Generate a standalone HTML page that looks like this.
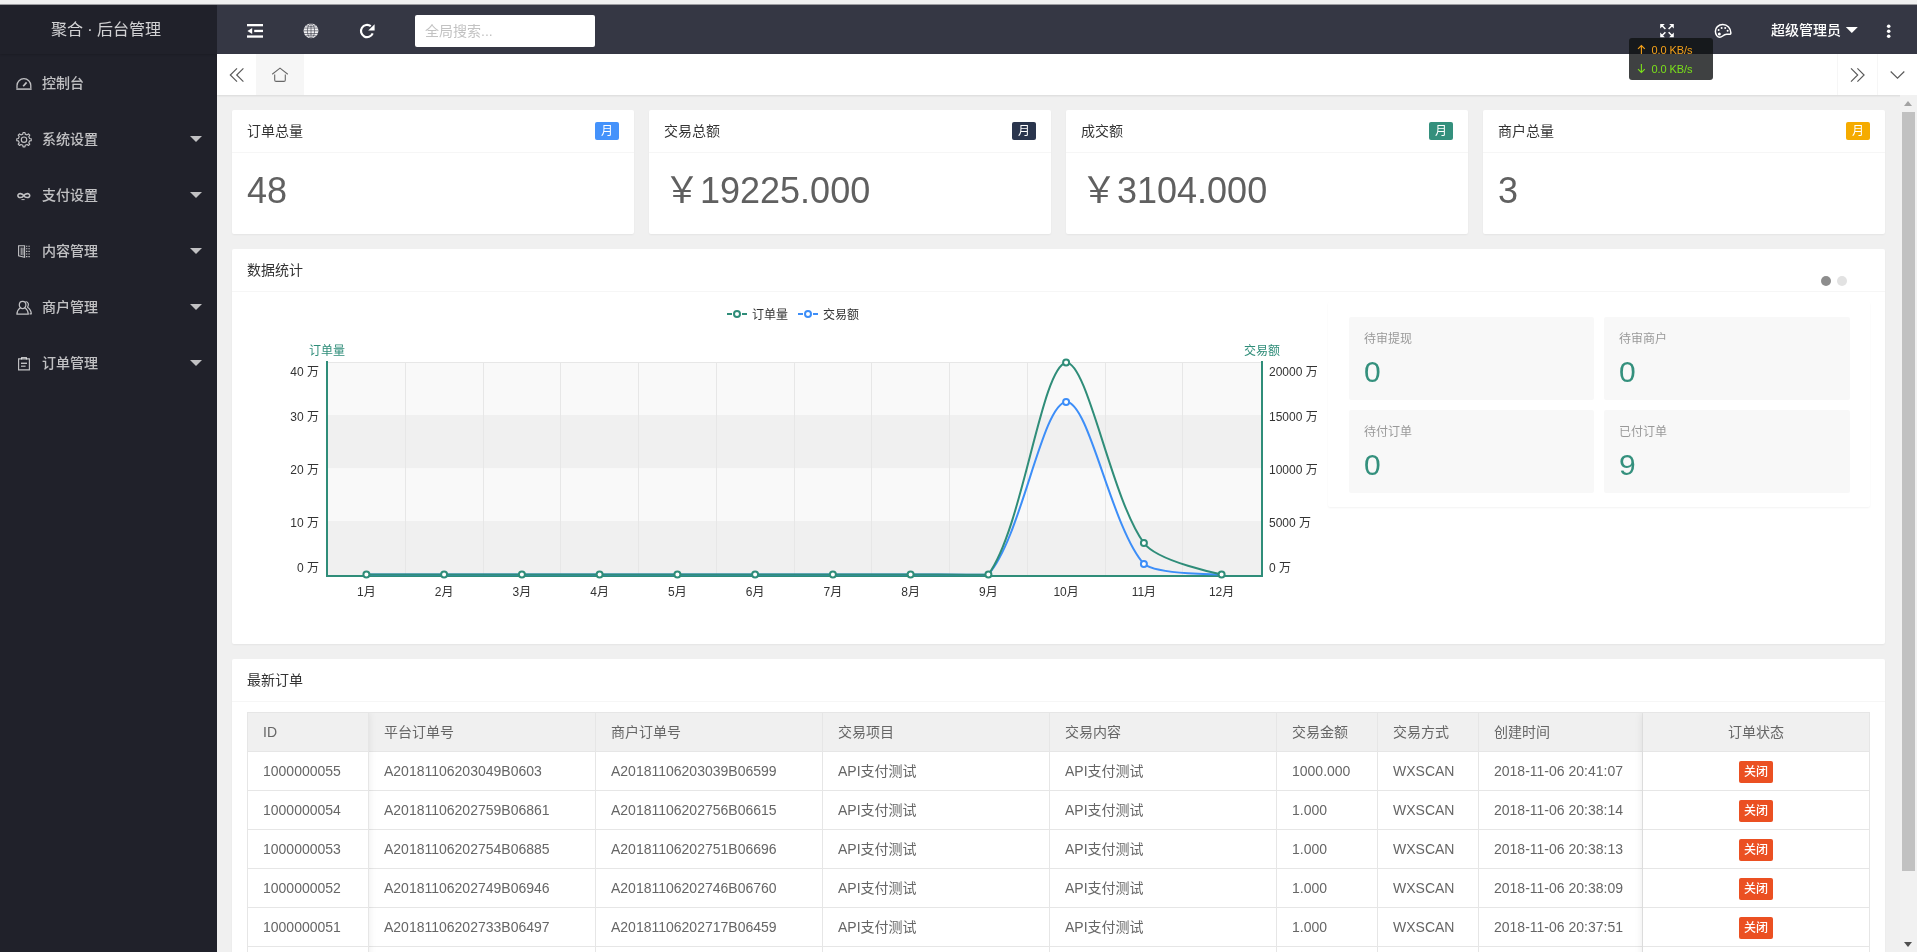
<!DOCTYPE html>
<html lang="zh-CN">
<head>
<meta charset="utf-8">
<title>聚合 · 后台管理</title>
<style>
*{box-sizing:border-box;margin:0;padding:0}
html,body{width:1917px;height:952px;overflow:hidden}
body{position:relative;background:#f0f0f0;font-family:"Liberation Sans","Noto Sans CJK SC",sans-serif;font-size:14px;color:#333;line-height:24px}
#root{position:absolute;left:0;top:0;width:1917px;height:952px;will-change:transform}
.abs{position:absolute}
svg{display:block;overflow:visible}
/* sidebar */
#side{position:absolute;left:0;top:4px;width:217px;height:948px;background:#20212a}
#logo{position:absolute;left:0;top:0;width:217px;height:50px;line-height:52px;text-align:center;font-size:16px;color:rgba(255,255,255,.8);box-shadow:0 1px 2px 0 rgba(0,0,0,.15);padding-right:5px}
.nav{position:absolute;left:0;width:217px;height:56px;line-height:56px;color:rgba(255,255,255,.72);font-size:14px}
.nav .t{position:absolute;left:42px;top:0;white-space:nowrap;font-weight:500}
.nav svg{position:absolute;left:16px;top:20px;width:16px;height:16px}
.nav i{position:absolute;left:190px;top:25px;width:0;height:0;border:6px solid transparent;border-top-color:rgba(255,255,255,.72);border-bottom-width:0}
/* header */
#header{position:absolute;left:217px;top:4px;width:1700px;height:50px;background:#353744}
#search{position:absolute;left:198px;top:11px;width:180px;height:32px;background:#fff;border-radius:2px;color:#c2c2c2;font-size:14px;line-height:32px;padding-left:10px}
#user{position:absolute;left:1554px;top:1px;line-height:50px;color:#fff;font-size:14px;font-weight:500;white-space:nowrap}
/* tabs */
#tabs{position:absolute;left:217px;top:54px;width:1700px;height:41px;background:#fff;box-shadow:0 1px 2px 0 rgba(0,0,0,.1)}
#tabs .home{position:absolute;left:39px;top:0;width:48px;height:41px;background:#f6f6f6}
#tabs .rb{position:absolute;top:0;width:40px;height:41px;border-left:1px solid #f6f6f6}
/* content */
.card{position:absolute;background:#fff;border-radius:2px;box-shadow:0 1px 2px 0 rgba(0,0,0,.05)}
.card .hd{position:absolute;left:0;top:0;right:0;height:43px;line-height:42px;padding-left:15px;border-bottom:1px solid #f6f6f6;font-size:14px;color:#333}
.badge{position:absolute;right:15px;top:12px;height:18px;line-height:18px;width:24px;text-align:center;border-radius:2px;color:#fff;font-size:12px}
.big{position:absolute;left:15px;top:63px;font-size:36px;line-height:36px;color:#606060;white-space:nowrap}
.bk{position:absolute;background:#f8f8f8;border-radius:2px;width:245px;height:83px}
.bk h3{position:absolute;left:15px;top:10px;font-size:12px;line-height:24px;font-weight:400;color:#999}
.bk p{position:absolute;left:15px;top:37px;font-size:30px;line-height:36px;color:#34907d}
/* table */
#tbl{position:absolute;left:15px;top:53px;width:1623px;border:1px solid #e6e6e6;border-bottom:0;overflow:hidden}
.tr{display:flex;height:39px;border-bottom:1px solid #e6e6e6;color:#666;line-height:38px;background:#fff}
.tr.th{background:#f0f0f0;color:#666}
.tr div{border-right:1px solid #e6e6e6;padding-left:15px;white-space:nowrap;overflow:hidden;flex:none}
.tr div:last-child{border-right:0;padding-left:0;text-align:center}
.c1{width:121px}.c2{width:227px}.c3{width:101px}.c4{width:164px}.c5{width:226px}
.fx{position:absolute;top:0;height:280px;pointer-events:none}
.btn{display:inline-block;width:34px;height:22px;line-height:22px;background:#eb5022;color:#fff;font-size:12px;font-weight:500;border-radius:2px;vertical-align:middle;text-align:center}
/* scrollbar */
#sb{position:absolute;left:1900px;top:95px;width:17px;height:857px;background:#f1f1f1}
#sb .th{position:absolute;left:2px;top:17px;width:13px;height:759px;background:#c1c1c1}
#sb .up,#sb .dn{position:absolute;left:4px;width:0;height:0;border:4.5px solid transparent}
#sb .up{border-bottom:5px solid #a3a3a3;border-top-width:0;top:6px}
#sb .dn{top:847px;border-top:5px solid #505050;border-bottom-width:0}
/* net speed */
#net{position:absolute;left:1629px;top:38px;width:84px;height:42px;border-radius:3px;background:rgba(15,17,19,.8);font-size:11px;line-height:19px;padding:3px 0 0 22.5px;white-space:nowrap;letter-spacing:-.1px}
#net svg{position:absolute;left:0;top:0}
</style>
</head>
<body>
<div id="root">
<div class="abs" style="left:0;top:4px;width:1917px;height:1px;background:#9b9b9f;z-index:5"></div>
<!-- SIDEBAR -->
<div id="side">
  <div id="logo">聚合 · 后台管理</div>
  <div class="nav" style="top:51px"><svg viewBox="0 0 16 16"><path d="M1 13.2V10.6A6.9 6.9 0 0 1 14.8 10.6V13.2" fill="none" stroke="currentColor" stroke-width="1.3"/><path d="M0.3 14.1H15.6" stroke="currentColor" stroke-width="1.5"/><path d="M7.2 11.2L10.6 7.4" stroke="currentColor" stroke-width="1.7"/></svg><span class="t">控制台</span></div>
  <div class="nav" style="top:107px"><svg viewBox="0 0 16 16"><path d="M6.80 3.13L7.03 1.46L8.97 1.46L9.20 3.13L11.09 3.91L12.43 2.90L13.80 4.27L12.79 5.61L13.57 7.50L15.24 7.73L15.24 9.67L13.57 9.90L12.79 11.79L13.80 13.13L12.43 14.50L11.09 13.49L9.20 14.27L8.97 15.94L7.03 15.94L6.80 14.27L4.91 13.49L3.57 14.50L2.20 13.13L3.21 11.79L2.43 9.90L0.76 9.67L0.76 7.73L2.43 7.50L3.21 5.61L2.20 4.27L3.57 2.90L4.91 3.91Z" fill="none" stroke="currentColor" stroke-width="1.15" stroke-linejoin="round"/><circle cx="8" cy="8.7" r="2.7" fill="none" stroke="currentColor" stroke-width="1.15"/></svg><span class="t">系统设置</span><i></i></div>
  <div class="nav" style="top:163px"><svg viewBox="0 0 16 16"><path d="M7.8 8.6C6.4 6.2 1.9 5.8 1.9 8.6C1.9 11.4 6.4 11 7.8 8.6C9.2 6.2 13.7 5.8 13.7 8.6C13.7 11.4 9.2 11 7.8 8.6Z" fill="none" stroke="currentColor" stroke-width="1.6"/><path d="M5.5 12.6H8.6" stroke="currentColor" stroke-width="1"/></svg><span class="t">支付设置</span><i></i></div>
  <div class="nav" style="top:219px"><svg viewBox="0 0 16 16"><path d="M2.6 2.7H8.6V14.4L2.6 12.8Z" fill="none" stroke="currentColor" stroke-width="1.1"/><path d="M5.2 4.6V12M7 4.6V12.4" stroke="currentColor" stroke-width="1"/><path d="M10 3.2h4M10 5.8h4M10 8.4h4M10 11h4M10 13.6h4" stroke="currentColor" stroke-width="1.1" stroke-dasharray="1.4 1"/></svg><span class="t">内容管理</span><i></i></div>
  <div class="nav" style="top:275px"><svg viewBox="0 0 16 16"><path d="M6.6 2.4A3.3 3.6 0 1 0 6.6 9.6A3.3 3.6 0 1 0 6.6 2.4ZM4.3 8.6C2.2 10.4 0.9 12.6 0.9 15.2H12.3C12.3 12.6 11 10.4 8.9 8.6" fill="none" stroke="currentColor" stroke-width="1.25" stroke-linejoin="round"/><path d="M9.6 2.5C12.2 2.6 13.3 5.6 11.6 8.2C13.8 9.8 15.2 12 15.3 14.8H13.6" fill="none" stroke="currentColor" stroke-width="1.25" stroke-linejoin="round"/></svg><span class="t">商户管理</span><i></i></div>
  <div class="nav" style="top:331px"><svg viewBox="0 0 16 16"><path d="M2.6 3.8H13.4V14.8H2.6Z" fill="none" stroke="currentColor" stroke-width="1.15"/><path d="M5.6 4.6V2.6H10.4V4.6" fill="none" stroke="currentColor" stroke-width="1.1"/><path d="M5 8.3H11" stroke="currentColor" stroke-width="1.4"/><path d="M5 11.2H9.6" stroke="currentColor" stroke-width="1.2"/></svg><span class="t">订单管理</span><i></i></div>
</div>
<!-- HEADER -->
<div id="header">
  <div id="search">全局搜索...</div>
  <div id="user">超级管理员</div>
</div>
<!-- TABS -->
<div id="tabs">
  <div class="home"></div>
  <div class="rb" style="left:1620px"></div>
  <div class="rb" style="left:1660px"></div>
</div>
<!-- CONTENT -->
<div id="content" class="abs" style="left:217px;top:95px;width:1683px;height:857px;overflow:hidden">
  <div class="card" style="left:15px;top:15px;width:402px;height:124px"><div class="hd">订单总量</div><span class="badge" style="background:#4492fb">月</span><div class="big">48</div></div>
  <div class="card" style="left:432px;top:15px;width:402px;height:124px"><div class="hd">交易总额</div><span class="badge" style="background:#2a354d">月</span><div class="big">￥19225.000</div></div>
  <div class="card" style="left:849px;top:15px;width:402px;height:124px"><div class="hd">成交额</div><span class="badge" style="background:#34907d">月</span><div class="big">￥3104.000</div></div>
  <div class="card" style="left:1266px;top:15px;width:402px;height:124px"><div class="hd">商户总量</div><span class="badge" style="background:#f5ab00">月</span><div class="big">3</div></div>

  <div class="card" id="chartcard" style="left:15px;top:154px;width:1653px;height:395px">
    <div class="hd">数据统计</div>
    <div class="abs" style="left:1589px;top:27px;width:10px;height:10px;border-radius:50%;background:#8d8d8d"></div>
    <div class="abs" style="left:1605px;top:27px;width:10px;height:10px;border-radius:50%;background:#e2e2e2"></div>
    <div class="card" style="left:1096px;top:53px;width:542px;height:205px">
      <div class="bk" style="left:21px;top:15px"><h3>待审提现</h3><p>0</p></div>
      <div class="bk" style="left:276px;top:15px;width:246px"><h3>待审商户</h3><p>0</p></div>
      <div class="bk" style="left:21px;top:108px"><h3>待付订单</h3><p>0</p></div>
      <div class="bk" style="left:276px;top:108px;width:246px"><h3>已付订单</h3><p>9</p></div>
    </div>
    <svg class="abs" style="left:-232px;top:-249px" width="1917" height="952" viewBox="0 0 1917 952" font-family="'Liberation Sans','Noto Sans CJK SC',sans-serif" font-size="12">
<rect x="327" y="362.00" width="935" height="53.00" fill="#f9f9f9"/>
<rect x="327" y="415.00" width="935" height="53.50" fill="#f0f0f0"/>
<rect x="327" y="468.50" width="935" height="52.50" fill="#f9f9f9"/>
<rect x="327" y="521.00" width="935" height="54.00" fill="#f0f0f0"/>
<path d="M405.5 362 V575M483.5 362 V575M560.5 362 V575M638.5 362 V575M716.5 362 V575M794.5 362 V575M871.5 362 V575M949.5 362 V575M1027.5 362 V575M1105.5 362 V575M1182.5 362 V575M327 362.5 H1262" stroke="#e7e7e7" stroke-width="1" fill="none"/>
<path d="M327 361V576H1262V361" stroke="#2f8d79" stroke-width="2" fill="none" stroke-linejoin="miter"/>
<path d="M366.4 574.4C366.4 574.4 420.8 574.4 444.1 574.4C467.4 574.4 498.6 574.4 521.9 574.4C545.2 574.4 576.3 574.4 599.6 574.4C623.0 574.4 654.0 574.4 677.4 574.4C700.7 574.4 731.8 574.4 755.1 574.4C778.5 574.4 809.5 574.4 832.9 574.4C856.2 574.4 887.3 574.4 910.6 574.4C934.0 574.4 974.8 575.0 988.4 574.4C1021.4 537.7 1042.2 403.6 1066.1 402.0C1088.9 400.5 1111.4 528.0 1143.9 564.0C1158.1 575.0 1221.6 574.4 1221.6 574.4" stroke="#3d8ef8" stroke-width="2" fill="none"/>
<path d="M366.4 574.4C366.4 574.4 420.8 574.4 444.1 574.4C467.4 574.4 498.6 574.4 521.9 574.4C545.2 574.4 576.3 574.4 599.6 574.4C623.0 574.4 654.0 574.4 677.4 574.4C700.7 574.4 731.8 574.4 755.1 574.4C778.5 574.4 809.5 574.4 832.9 574.4C856.2 574.4 887.3 574.4 910.6 574.4C934.0 574.4 976.4 575.0 988.4 574.4C1023.1 527.1 1041.2 367.5 1066.1 362.5C1087.8 362.0 1111.2 498.4 1143.9 543.0C1157.8 562.0 1221.6 574.4 1221.6 574.4" stroke="#2f8d79" stroke-width="2" fill="none"/>
<circle cx="1066.1" cy="402.0" r="3" fill="#fff" stroke="#3d8ef8" stroke-width="2"/>
<circle cx="1143.9" cy="564.0" r="3" fill="#fff" stroke="#3d8ef8" stroke-width="2"/>
<circle cx="366.4" cy="574.4" r="3" fill="#fff" stroke="#2f8d79" stroke-width="2"/>
<circle cx="444.1" cy="574.4" r="3" fill="#fff" stroke="#2f8d79" stroke-width="2"/>
<circle cx="521.9" cy="574.4" r="3" fill="#fff" stroke="#2f8d79" stroke-width="2"/>
<circle cx="599.6" cy="574.4" r="3" fill="#fff" stroke="#2f8d79" stroke-width="2"/>
<circle cx="677.4" cy="574.4" r="3" fill="#fff" stroke="#2f8d79" stroke-width="2"/>
<circle cx="755.1" cy="574.4" r="3" fill="#fff" stroke="#2f8d79" stroke-width="2"/>
<circle cx="832.9" cy="574.4" r="3" fill="#fff" stroke="#2f8d79" stroke-width="2"/>
<circle cx="910.6" cy="574.4" r="3" fill="#fff" stroke="#2f8d79" stroke-width="2"/>
<circle cx="988.4" cy="574.4" r="3" fill="#fff" stroke="#2f8d79" stroke-width="2"/>
<circle cx="1066.1" cy="362.5" r="3" fill="#fff" stroke="#2f8d79" stroke-width="2"/>
<circle cx="1143.9" cy="543.0" r="3" fill="#fff" stroke="#2f8d79" stroke-width="2"/>
<circle cx="1221.6" cy="574.4" r="3" fill="#fff" stroke="#2f8d79" stroke-width="2"/>
<g fill="#333">
<text x="366.4" y="596" text-anchor="middle">1月</text>
<text x="444.1" y="596" text-anchor="middle">2月</text>
<text x="521.9" y="596" text-anchor="middle">3月</text>
<text x="599.6" y="596" text-anchor="middle">4月</text>
<text x="677.4" y="596" text-anchor="middle">5月</text>
<text x="755.1" y="596" text-anchor="middle">6月</text>
<text x="832.9" y="596" text-anchor="middle">7月</text>
<text x="910.6" y="596" text-anchor="middle">8月</text>
<text x="988.4" y="596" text-anchor="middle">9月</text>
<text x="1066.1" y="596" text-anchor="middle">10月</text>
<text x="1143.9" y="596" text-anchor="middle">11月</text>
<text x="1221.6" y="596" text-anchor="middle">12月</text>
<text x="319" y="376" text-anchor="end">40 万</text>
<text x="319" y="421" text-anchor="end">30 万</text>
<text x="319" y="474" text-anchor="end">20 万</text>
<text x="319" y="527" text-anchor="end">10 万</text>
<text x="319" y="572" text-anchor="end">0 万</text>
<text x="1269" y="376">20000 万</text>
<text x="1269" y="421">15000 万</text>
<text x="1269" y="474">10000 万</text>
<text x="1269" y="527">5000 万</text>
<text x="1269" y="572">0 万</text>
</g>
<text x="327" y="354.5" text-anchor="middle" fill="#2f8d79">订单量</text>
<text x="1262" y="354.5" text-anchor="middle" fill="#2f8d79">交易额</text>
<path d="M727 314h5M742 314h5" stroke="#2f8d79" stroke-width="2"/>
<circle cx="737" cy="314" r="3" fill="#fff" stroke="#2f8d79" stroke-width="2"/>
<text x="752" y="318.5" fill="#333">订单量</text>
<path d="M798 314h5M813 314h5" stroke="#3d8ef8" stroke-width="2"/>
<circle cx="808" cy="314" r="3" fill="#fff" stroke="#3d8ef8" stroke-width="2"/>
<text x="823" y="318.5" fill="#333">交易额</text>
</svg>
  </div>

  <div class="card" style="left:15px;top:564px;width:1653px;height:400px">
    <div class="hd">最新订单</div>
    <div id="tbl">
      <div class="tr th"><div class="c1">ID</div><div class="c2">平台订单号</div><div class="c2">商户订单号</div><div class="c2">交易项目</div><div class="c2">交易内容</div><div class="c3">交易金额</div><div class="c3">交易方式</div><div class="c4">创建时间</div><div class="c5">订单状态</div></div>
      <div class="tr"><div class="c1">1000000055</div><div class="c2">A20181106203049B0603</div><div class="c2">A20181106203039B06599</div><div class="c2">API支付测试</div><div class="c2">API支付测试</div><div class="c3">1000.000</div><div class="c3">WXSCAN</div><div class="c4">2018-11-06 20:41:07</div><div class="c5"><span class="btn">关闭</span></div></div>
      <div class="tr"><div class="c1">1000000054</div><div class="c2">A20181106202759B06861</div><div class="c2">A20181106202756B06615</div><div class="c2">API支付测试</div><div class="c2">API支付测试</div><div class="c3">1.000</div><div class="c3">WXSCAN</div><div class="c4">2018-11-06 20:38:14</div><div class="c5"><span class="btn">关闭</span></div></div>
      <div class="tr"><div class="c1">1000000053</div><div class="c2">A20181106202754B06885</div><div class="c2">A20181106202751B06696</div><div class="c2">API支付测试</div><div class="c2">API支付测试</div><div class="c3">1.000</div><div class="c3">WXSCAN</div><div class="c4">2018-11-06 20:38:13</div><div class="c5"><span class="btn">关闭</span></div></div>
      <div class="tr"><div class="c1">1000000052</div><div class="c2">A20181106202749B06946</div><div class="c2">A20181106202746B06760</div><div class="c2">API支付测试</div><div class="c2">API支付测试</div><div class="c3">1.000</div><div class="c3">WXSCAN</div><div class="c4">2018-11-06 20:38:09</div><div class="c5"><span class="btn">关闭</span></div></div>
      <div class="tr"><div class="c1">1000000051</div><div class="c2">A20181106202733B06497</div><div class="c2">A20181106202717B06459</div><div class="c2">API支付测试</div><div class="c2">API支付测试</div><div class="c3">1.000</div><div class="c3">WXSCAN</div><div class="c4">2018-11-06 20:37:51</div><div class="c5"><span class="btn">关闭</span></div></div>
      <div class="fx" style="left:0;width:121px;box-shadow:0 -1px 8px rgba(0,0,0,.08)"></div><div class="fx" style="left:1395px;width:226px;box-shadow:-1px 0 8px rgba(0,0,0,.08)"></div>
      <div class="tr"><div class="c1"></div><div class="c2"></div><div class="c2"></div><div class="c2"></div><div class="c2"></div><div class="c3"></div><div class="c3"></div><div class="c4"></div><div class="c5"></div></div>
    </div>
  </div>
</div>
<svg class="abs" style="left:0;top:0" width="1917" height="100" viewBox="0 0 1917 100">
<g fill="#fff"><rect x="247" y="24" width="16" height="2.3"/><rect x="254.2" y="29.8" width="8.8" height="2.3"/><rect x="247" y="35.4" width="16" height="2.3"/><path d="M247.4 31L252.2 28V34Z"/></g>
<circle cx="311" cy="30.8" r="7.4" fill="#f1f1f3"/>
<g fill="none" stroke="#353744" stroke-width=".6"><path d="M304 28.1H318M304 30.8H318M304 33.5H318M311 23.5V38.1M305.5 25.6Q311 27.6 316.5 25.6M305.5 36Q311 34 316.5 36"/><ellipse cx="311" cy="30.8" rx="3.6" ry="7.2"/></g>
<path d="M370.8 26.2A6.1 6.1 0 1 0 372.7 33.4" fill="none" stroke="#fff" stroke-width="2.2"/><path d="M374.6 24.2V30.6H368.2Z" fill="#fff"/>
<g stroke="#fff" stroke-width="1.5" fill="#fff"><path d="M1665.4 29L1661.6 25.2M1668.6 29L1672.4 25.2M1665.4 32.2L1661.6 36M1668.6 32.2L1672.4 36"/><path stroke="none" d="M1660.2 24H1664.8L1660.2 28.6ZM1673.8 24H1669.2L1673.8 28.6ZM1660.2 37.2H1664.8L1660.2 32.6ZM1673.8 37.2H1669.2L1673.8 32.6Z"/></g>
<path d="M1722.8 24.6C1718.3 24.6 1715.4 27.8 1715.4 31.2C1715.4 34.8 1717.5 37.3 1719.8 37.3C1722.6 37.3 1722.8 34.6 1726.6 34.3C1728.6 34.1 1730.9 35 1730.9 33C1730.9 28 1727.3 24.6 1722.8 24.6Z" fill="none" stroke="#fff" stroke-width="1.5"/>
<g fill="#fff"><circle cx="1718.6" cy="30" r="1"/><circle cx="1721.6" cy="27.9" r="1"/><circle cx="1725.2" cy="28.1" r="1"/><circle cx="1727.6" cy="30.8" r="1"/><circle cx="1719.3" cy="34" r="1.5"/>
<path d="M1845.8 27H1857.8L1851.8 33Z"/><circle cx="1888.7" cy="26.3" r="1.8"/><circle cx="1888.7" cy="31.3" r="1.8"/><circle cx="1888.7" cy="36.3" r="1.8"/></g>
<g fill="none" stroke="#595959" stroke-width="1.15"><path d="M237 68.3L230.3 75L237 81.7M243.4 68.3L236.7 75L243.4 81.7"/><path d="M1851 68.3L1857.7 75L1851 81.7M1857.4 68.3L1864.1 75L1857.4 81.7"/><path d="M1890.7 71.5L1897.5 78.2L1904.3 71.5"/></g>
<g fill="none" stroke="#686868" stroke-width="1.1"><path d="M272.2 74.2L280 68.1L287.8 74.2"/><path d="M274.7 74.6V80Q274.7 81.4 276.1 81.4H283.9Q285.3 81.4 285.3 80V74.6"/></g>
</svg>
<!-- SCROLLBAR -->
<div id="sb"><div class="up"></div><div class="th"></div><div class="dn"></div></div>
<!-- NET -->
<div id="net"><svg width="84" height="42" viewBox="0 0 84 42" fill="none" stroke-width="1.1"><path d="M12.4 16V7.4M9 10.9L12.4 7.5L15.8 10.9" stroke="#f5a21a"/><path d="M12.4 26V34.6M9 31.1L12.4 34.5L15.8 31.1" stroke="#7be01a"/></svg><div style="color:#f5a21a">0.0 KB/s</div><div style="color:#7be01a">0.0 KB/s</div></div>
</div>
</body>
</html>
